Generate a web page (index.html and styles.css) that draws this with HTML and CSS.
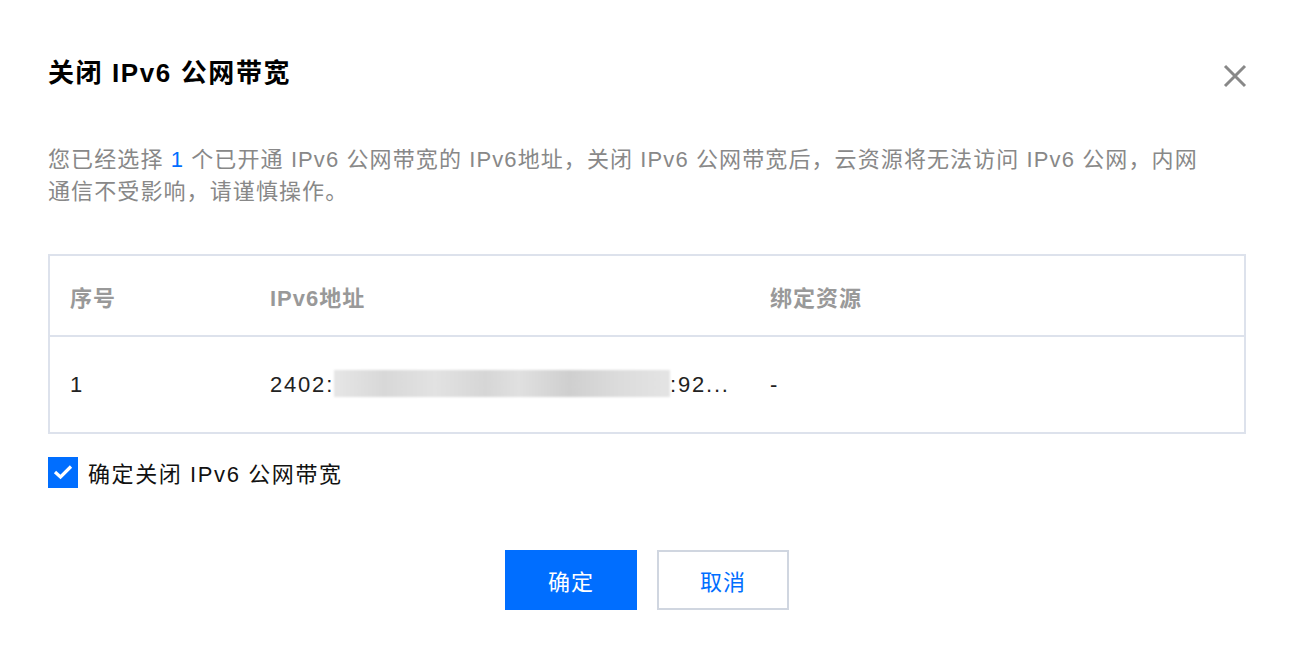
FILE: index.html
```html
<!DOCTYPE html>
<html>
<head>
    <meta charset="utf-8">
    <title>关闭 IPv6 公网带宽</title>
    <link rel="stylesheet" href="styles.css">
</head>
<body>
    <div class="dialog">
        <div class="dialog-head">
            <h3 class="dialog-title">关闭 IPv6 公网带宽</h3>
            <span class="dialog-close">
                <svg width="24" height="24" viewBox="0 0 24 24">
                    <path d="M2 2 L22 22 M22 2 L2 22" stroke="#888" stroke-width="3" fill="none"/>
                </svg>
            </span>
        </div>
        <p class="dialog-desc">
            您已经选择 <span class="num">1</span> 个已开通 IPv6 公网带宽的 IPv6地址，关闭 IPv6 公网带宽后，云资源将无法访问 IPv6 公网，内网通信不受影响，请谨慎操作。
        </p>
        <table class="list">
            <tr class="list-head">
                <th class="col-no">序号</th>
                <th class="col-ip">IPv6地址</th>
                <th>绑定资源</th>
            </tr>
            <tr class="list-row">
                <td>1</td>
                <td>2402:<span class="mask"></span>:92...</td>
                <td>-</td>
            </tr>
        </table>
        <label class="confirm">
            <span class="check">
                <svg width="20" height="16" viewBox="0 0 20 16">
                    <path d="M2 8 L7.5 13 L18 2.5" stroke="#fff" stroke-width="3.2" fill="none"/>
                </svg>
            </span>
            确定关闭 IPv6 公网带宽
        </label>
        <div class="dialog-foot">
            <button class="btn btn-primary">确定</button>
            <button class="btn">取消</button>
        </div>
    </div>
</body>
</html>
```

FILE: styles.css
```css
body
{
    margin: 0;
    background: #fff;
    font-family: "Liberation Sans", "Noto Sans CJK SC", sans-serif;
    color: #000;
}
.dialog
{
    padding: 57px 45px 0 48px;
}
.dialog-head
{
    display: flex;
    justify-content: space-between;
    align-items: center;
    height: 32px;
}
.dialog-title
{
    margin: 0;
    font-size: 26px;
    font-weight: bold;
    line-height: 32px;
    letter-spacing: 1.6px;
}
.dialog-close
{
    display: flex;
    margin: 6px -1px 0 0;
}
.dialog-desc
{
    margin: 55px 36px 0 0;
    font-size: 22px;
    line-height: 32px;
    color: #888;
    letter-spacing: 1.1px;
}
.num
{
    color: #006eff;
}
.list
{
    width: 100%;
    margin-top: 46px;
    border-collapse: collapse;
    border: 2px solid #dde2ec;
    font-size: 22px;
    letter-spacing: 1px;
}
.list th, .list td
{
    text-align: left;
    padding: 0 20px;
}
.list-head
{
    height: 81px;
    border-bottom: 2px solid #dde2ec;
}
.list-head th
{
    font-weight: bold;
    color: #999;
}
.list-row
{
    height: 97px;
    color: #222;
    letter-spacing: 1.8px;
}
.col-no
{
    width: 160px;
}
.col-ip
{
    width: 460px;
}
.mask
{
    display: inline-block;
    vertical-align: middle;
    width: 336px;
    height: 27px;
    margin-top: -4px;
    background: linear-gradient(90deg, #e6e6e6, #d8d8d8 15%, #e2e2e2 30%, #d6d6d6 45%, #e0e0e0 55%, #cfcfcf 70%, #dcdcdc 85%, #e4e4e4);
    filter: blur(1px);
}
.confirm
{
    display: flex;
    align-items: center;
    gap: 10px;
    margin-top: 22px;
    font-size: 22px;
    letter-spacing: 1.6px;
    color: #111;
}
.check
{
    display: flex;
    align-items: center;
    justify-content: center;
    width: 30px;
    height: 31px;
    background: #006eff;
}
.dialog-foot
{
    display: flex;
    justify-content: center;
    gap: 20px;
    margin-top: 62px;
}
.btn
{
    width: 132px;
    height: 60px;
    border: 2px solid #d0d6e0;
    background: #fff;
    color: #006eff;
    font-family: inherit;
    font-size: 22px;
    letter-spacing: 1px;
}
.btn-primary
{
    border-color: #006eff;
    background: #006eff;
    color: #fff;
}
```
